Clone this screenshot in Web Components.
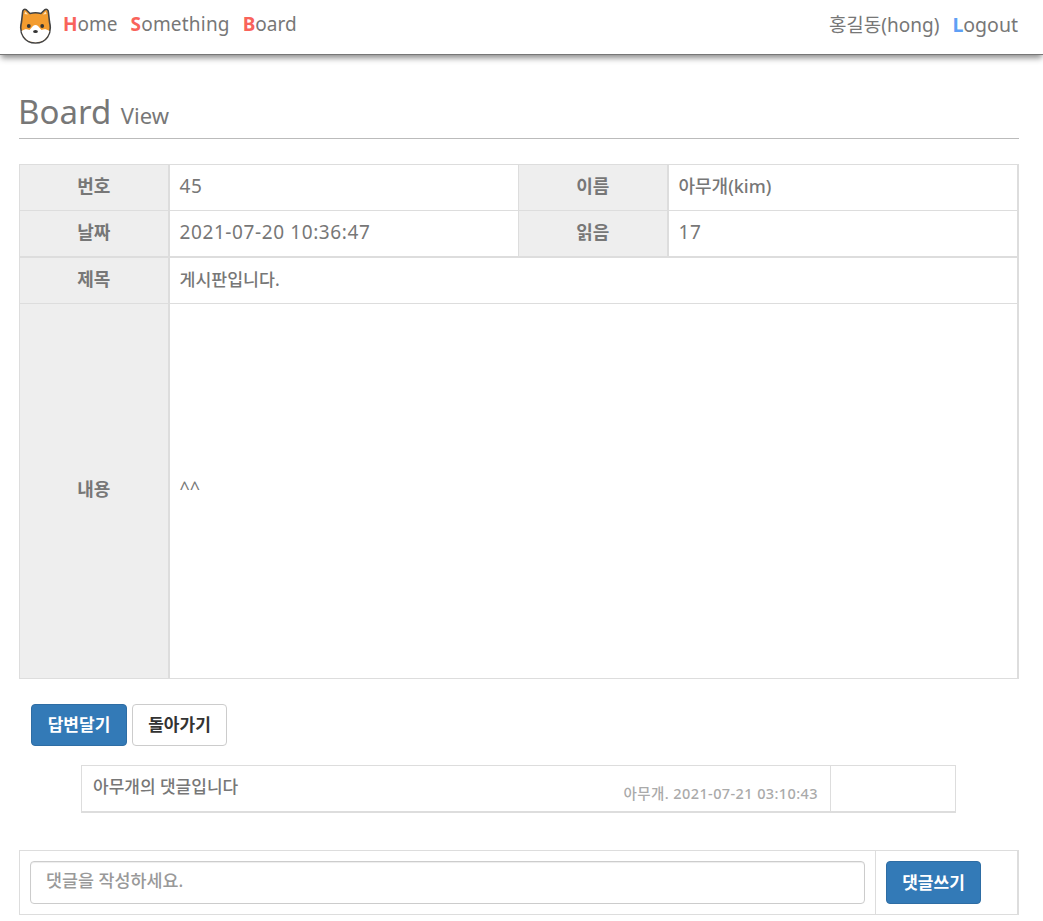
<!DOCTYPE html>
<html lang="ko">
<head>
<meta charset="utf-8">
<title>Board View</title>
<style>
  html, body { margin: 0; background: #fff; }
  body { font: 18px/1.42857 "Noto Sans", "Noto Sans CJK KR", sans-serif; color: #777; }
  main { display: block; padding: 0 24px 0 19px; }
</style>
</head>
<body>
<app-nav></app-nav>
<main>
  <page-title sub="View">Board</page-title>
  <board-view></board-view>
  <div style="display:flex;gap:5px;padding:25px 12px 0">
    <ui-button kind="primary">답변달기</ui-button>
    <ui-button style="width:95px">돌아가기</ui-button>
  </div>
  <comment-row meta="아무개. 2021-07-21 03:10:43">아무개의 댓글입니다</comment-row>
  <comment-form></comment-form>
</main>
<script>
(function () {
  const FONT = '"Noto Sans", "Noto Sans CJK KR", sans-serif';

  class AppNav extends HTMLElement {
    constructor() {
      super();
      this.attachShadow({ mode: 'open' });
      this.shadowRoot.innerHTML = `
        <style>
          :host { display: flex; align-items: center; justify-content: space-between; box-sizing: border-box;
            height: 55px; padding: 0 25px 0 19px; border-bottom: 1px solid #777; background: #fff;
            box-shadow: 0 4px 6px -1px rgba(0,0,0,.45); font: 19px ${FONT}; color: #777; }
          .side { display: flex; align-items: center; gap: 13px; }
          .side span { margin-bottom: 6px; }
          svg { display: block; width: 33px; height: 36px; margin: 0 -2px 2px 0; }
          b { font-weight: 700; }
          .r { color: #f9635b; }
          .l { color: #5f9ff5; }
          .wide { letter-spacing: .2px; }
          .user { font-size: 19px; }
          .out { font-size: 19.500px; }
        </style>
        <div class="side">
          <svg viewBox="0 0 33 36">
            <path d="M3.500 5C3.500 1.500 5.500 .5 7.500 2L11 5.500Q16.500 4 22 5.500L25.500 2C27.500 .5 29.500 1.500 29.500 5L30.500 14C33.500 26 27 35 16.500 35S-.5 26 2.500 14Z" fill="#f39c2f" stroke="#444" stroke-width="1.600" stroke-linejoin="round"/>
            <path d="M5.500 6L6.500 3.500L9 6.500ZM27.500 6L26.500 3.500L24 6.500Z" fill="#fde3bd"/>
            <path d="M2.600 23C5.500 21 8 21 10.500 22L14 18Q16.500 16 19 18L22.500 22C25 21 27.500 21 30.400 23C28.500 30.500 23.500 34.200 16.500 34.200S4.500 30.500 2.600 23Z" fill="#fff"/>
            <circle cx="9.800" cy="18" r="1.900" fill="#333"/>
            <circle cx="23.200" cy="18" r="1.900" fill="#333"/>
            <ellipse cx="16.500" cy="23.500" rx="2.400" ry="1.500" fill="#333"/>
          </svg>
          <span><b class="r">H</b>ome</span>
          <span class="wide"><b class="r">S</b>omething</span>
          <span><b class="r">B</b>oard</span>
        </div>
        <div class="side">
          <span class="user">홍길동(hong)</span>
          <span class="out"><b class="l">L</b>ogout</span>
        </div>`;
    }
  }

  class PageTitle extends HTMLElement {
    constructor() {
      super();
      this.attachShadow({ mode: 'open' });
    }
    connectedCallback() {
      this.shadowRoot.innerHTML = `
        <style>
          :host { display: block; margin-top: 36px; padding-bottom: 4px; border-bottom: 1px solid #bbb;
            font: 33px/1.3 ${FONT}; color: #777; }
          small { font-size: 22px; margin-left: 1px; }
          .t { margin-left: -1px; }
        </style>
        <span class="t"><slot></slot></span> <small>${this.getAttribute('sub')}</small>`;
    }
  }

  class BoardView extends HTMLElement {
    constructor() {
      super();
      this.attachShadow({ mode: 'open' });
      this.shadowRoot.innerHTML = `
        <style>
          :host { display: block; margin-top: 25px; font: 18px ${FONT}; color: #777; }
          table { width: 100%; border-collapse: collapse; table-layout: fixed; }
          th, td { border: 1px solid #ddd; padding: 0 10px 5px; height: 46px; box-sizing: border-box; text-align: left; font-weight: 400; }
          th { background: #eee; text-align: center; font-weight: 700; border-right-width: 2px; }
          tr.thick th, tr.thick td { border-bottom-width: 2px; height: 47px; }
          tr.body th, tr.body td { height: 375px; }
          td.end { border-right-width: 2px; }
          td.num { font-size: 19px; letter-spacing: .6px; padding-bottom: 3px; }
          td.ko { font-size: 17.300px; font-weight: 500; }
          td.name { font-weight: 500; }
        </style>
        <table>
          <colgroup><col style="width:149px"><col style="width:350px"><col style="width:149px"><col></colgroup>
          <tr><th>번호</th><td class="num">45</td><th>이름</th><td class="end name">아무개(kim)</td></tr>
          <tr class="thick"><th>날짜</th><td class="num">2021-07-20 10:36:47</td><th>읽음</th><td class="end num">17</td></tr>
          <tr><th>제목</th><td colspan="3" class="end ko">게시판입니다.</td></tr>
          <tr class="body"><th>내용</th><td colspan="3" class="end">^^</td></tr>
        </table>`;
    }
  }

  class UiButton extends HTMLElement {
    constructor() {
      super();
      this.attachShadow({ mode: 'open' });
      this.shadowRoot.innerHTML = `
        <style>
          :host { display: inline-flex; align-items: center; justify-content: center; box-sizing: border-box;
            height: 42px; width: 96px; padding: 0 0 2px; border: 1px solid #ccc; border-radius: 4px; background: #fff;
            font: 700 17px ${FONT}; color: #333; }
          :host([kind="primary"]) { background: #337ab7; border-color: #2e6da4; color: #fff; }
        </style>
        <slot></slot>`;
    }
  }

  class CommentRow extends HTMLElement {
    constructor() {
      super();
      this.attachShadow({ mode: 'open' });
    }
    connectedCallback() {
      this.shadowRoot.innerHTML = `
        <style>
          :host { display: grid; grid-template-columns: 1fr 124px; box-sizing: border-box; height: 48px; margin: 19px 63px 0 62px;
            border: 1px solid #ddd; border-bottom-width: 2px; font: 17px ${FONT}; color: #777; }
          .text { position: relative; padding: 7px 11px; font-weight: 500; border-right: 1px solid #ddd; }
          .meta { position: absolute; right: 12px; bottom: 8px; font-size: 14.500px; letter-spacing: .4px; font-weight: 500; color: #aaa; }
        </style>
        <div class="text"><slot></slot><span class="meta">${this.getAttribute('meta')}</span></div>
        <div></div>`;
    }
  }

  class CommentForm extends HTMLElement {
    constructor() {
      super();
      this.attachShadow({ mode: 'open' });
      this.shadowRoot.innerHTML = `
        <style>
          :host { display: grid; grid-template-columns: 856px 1fr; box-sizing: border-box; height: 65px; margin-top: 37px;
            border: 1px solid #ddd; border-right-width: 2px; font: 17px ${FONT}; }
          .input { padding: 10px; border-right: 1px solid #ddd; }
          input { display: block; box-sizing: border-box; width: 100%; height: 43px; padding: 0 15px 4px; border: 1px solid #ccc; border-radius: 4px;
            box-shadow: inset 0 1px 1px rgba(0,0,0,.075); font: 500 17.400px ${FONT}; color: #555; outline: none; }
          input::placeholder { color: #999; opacity: 1; }
          .act { padding: 10px; }
          ui-button { height: 43px; width: 95px; }
        </style>
        <div class="input"><input placeholder="댓글을 작성하세요."></div>
        <div class="act"><ui-button kind="primary">댓글쓰기</ui-button></div>`;
    }
  }

  customElements.define('ui-button', UiButton);
  customElements.define('app-nav', AppNav);
  customElements.define('page-title', PageTitle);
  customElements.define('board-view', BoardView);
  customElements.define('comment-row', CommentRow);
  customElements.define('comment-form', CommentForm);
})();
</script>
</body>
</html>
